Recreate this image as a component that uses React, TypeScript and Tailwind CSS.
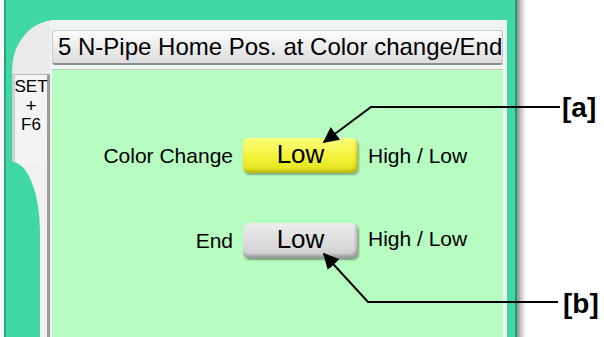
export default function App() {
  return (
    <div className="relative flex h-[337px] w-[604px] overflow-hidden bg-white font-['Liberation_Sans',Arial,sans-serif] text-black">
      {/* green device frame */}
      <div className="ml-[4px] flex h-full w-[513px] flex-col border-l-2 border-r-2 border-l-[#2aa57c] border-r-[#23986f] bg-[#3fd8a4] pl-[6px] pr-[8px] pt-[20px]">
        <div className="flex grow overflow-hidden rounded-tl-[44px_50px] bg-[#ebe9eb]">
          {/* left tab column */}
          <div className="flex w-[38px] flex-col">
            <div className="h-[54px]" />
            <div className="flex h-[88px] flex-col items-center border-r-[3px] border-t border-l-[3px] border-r-[#9d9d9d] border-t-[#b5b5b5] border-l-[#cfcfcf] bg-[#f4f4f4] pt-[2px] text-[17px] leading-[19px]">
              <span>SET</span>
              <span className="text-[19px] leading-[19px]">+</span>
              <span>F6</span>
            </div>
            <div className="flex grow border-r-[3px] border-r-[#9d9d9d] bg-[#f2f0f2]">
              <div className="w-[28px] rounded-tr-[28px_70px] bg-[#3fd8a4]" />
            </div>
          </div>

          {/* main column */}
          <div className="flex grow flex-col bg-[#eef4f0] pl-[2px] pr-[4px] pt-[10px]">
            <div className="flex h-[35px] items-center rounded-[3px] border border-b-2 border-[#c9c9c9] border-b-[#8f8f8f] bg-linear-to-b from-[#fdfdfd] to-[#dcdcdc] pl-[5px] text-[24px] leading-none whitespace-nowrap">
              5 N-Pipe Home Pos. at Color change/End
            </div>
            <div className="h-[5px] border-b border-[#c4c4c4]" />
            <div className="grid grow grid-cols-[181px_115px_auto] content-start items-center gap-x-[10px] gap-y-[50px] bg-[#b7fcc0] pt-[68px] text-[21px] leading-none">
              <span className="text-right">Color Change</span>
              <div className="flex h-[35px] items-center justify-center rounded-[6px] bg-linear-to-b from-[#fbff7a] via-[#f3f33a] to-[#e2e218] pb-[3px] text-[26px] shadow-[inset_-2px_-3px_3px_rgba(110,110,0,0.35),1px_2px_2px_rgba(0,0,0,0.3)]">
                Low
              </div>
              <span>High / Low</span>

              <span className="text-right">End</span>
              <div className="flex h-[35px] items-center justify-center rounded-[6px] bg-linear-to-b from-[#ececec] via-[#dedede] to-[#cdcdcd] pb-[3px] text-[26px] shadow-[inset_-2px_-3px_3px_rgba(0,0,0,0.25),1px_2px_2px_rgba(0,0,0,0.35)]">
                Low
              </div>
              <span className="-mt-[4px]">High / Low</span>
            </div>
          </div>
        </div>
      </div>
      {/* right shadow of the frame */}
      <div className="h-full w-[9px] bg-linear-to-r from-[#8d8d8d] via-[#d0d0d0] to-white" />

      {/* callouts */}
      <svg className="absolute left-0 top-0" width="604" height="337" viewBox="0 0 604 337">
        <defs>
          <marker id="ah" viewBox="0 0 10 10" refX="9" refY="5" markerWidth="8" markerHeight="8" orient="auto-start-reverse">
            <path d="M0 0 L10 5 L0 10 z" fill="#000" />
          </marker>
        </defs>
        <polyline points="560,107 371,107 324,142" fill="none" stroke="#000" strokeWidth="2" markerEnd="url(#ah)" />
        <polyline points="558,302 368,302 324,254" fill="none" stroke="#000" strokeWidth="2" markerEnd="url(#ah)" />
      </svg>
      <span className="absolute left-[562px] top-[94px] text-[28px] font-bold leading-none">[a]</span>
      <span className="absolute left-[563px] top-[290px] text-[28px] font-bold leading-none">[b]</span>
    </div>
  );
}
